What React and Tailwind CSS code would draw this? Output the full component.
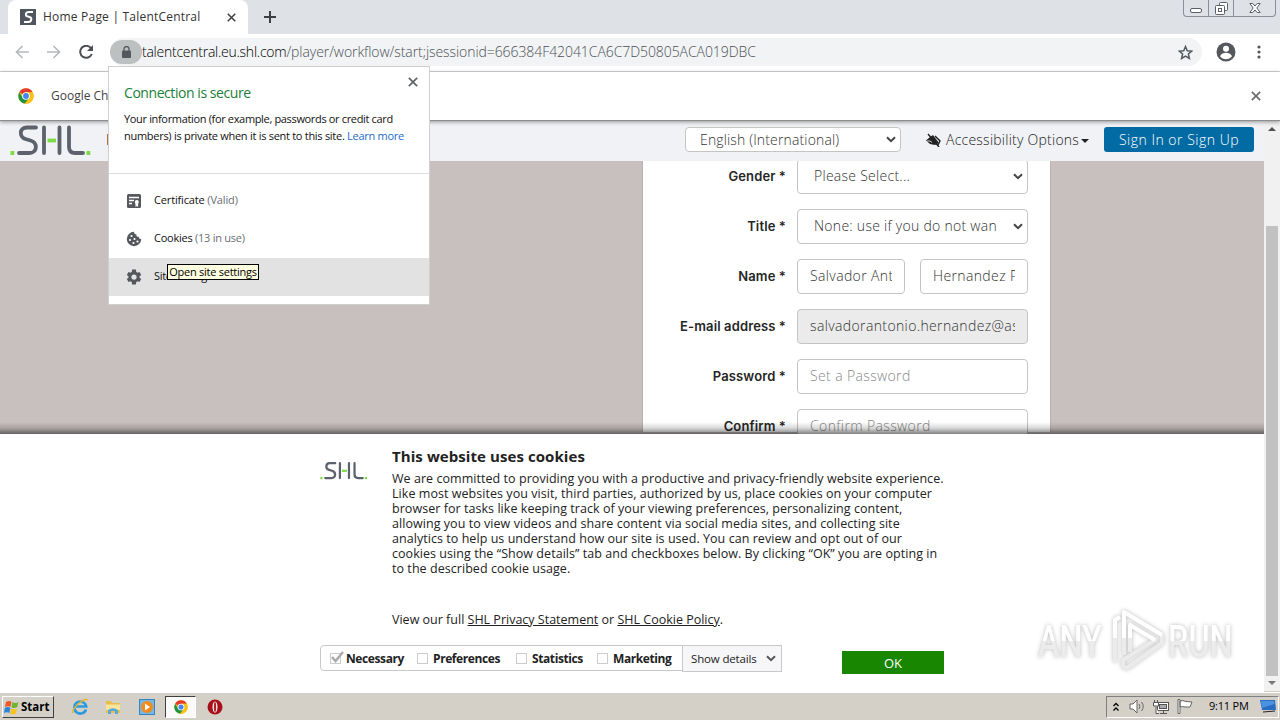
import React from 'react';

const Close = ({ className }) => (
  <svg className={className} viewBox="0 0 12 12" fill="none" stroke="currentColor" strokeWidth="2">
    <path d="M1 1l10 10M11 1L1 11" />
  </svg>
);

const Chevron = ({ className }) => (
  <svg className={className} viewBox="0 0 10 7" fill="none" stroke="currentColor" strokeWidth="2">
    <path d="M1 1.2l4 4 4-4" />
  </svg>
);

const ChromeLogo = ({ className }) => (
  <svg className={className} viewBox="0 0 48 48">
    <circle cx="24" cy="24" r="23" fill="#fbc116" />
    <path d="M24 24L4 12.5A23 23 0 0 1 44 12.5H24z" fill="#e33b2e" />
    <path d="M4.1 12.5A23 23 0 0 0 21 46.8L34 30 24 24l-10 5z" fill="#229342" />
    <path d="M24 12.5h20A23 23 0 0 1 21 46.8L34 30z" fill="#fbc116" />
    <circle cx="24" cy="24" r="11.5" fill="#fff" />
    <circle cx="24" cy="24" r="8.8" fill="#4285f4" />
  </svg>
);

const ShlLogo = ({ className }) => (
  <svg className={className} viewBox="0 0 82 32" fill="none" strokeWidth="3.8">
    <g stroke="#5b626c" strokeLinecap="round" strokeLinejoin="round">
      <path d="M26 3.500H17c-8 0-8 9.500-1.500 11.500l5 1.500c8 2.500 6.500 12.500-1 12.500H9" />
      <path d="M34 3.500v25.500M49.500 3.500v25.500M59 3.500v19.500c0 4 2 6 6 6h8" />
    </g>
    <path d="M37.500 16.500h8.500" stroke="#7bdc43" />
    <path d="M.5 29h3.800M76.500 29h3.800" stroke="#7bdc43" />
  </svg>
);

const fields = [
  { label: 'Gender', value: 'Please Select...', select: true },
  { label: 'Title', value: 'None: use if you do not want to specify', select: true },
  { label: 'Name', value: 'Salvador Antonio', second: 'Hernandez Perez' },
  { label: 'E-mail address', value: 'salvadorantonio.hernandez@astellas.com', disabled: true },
  { label: 'Password', value: 'Set a Password', placeholder: true },
  { label: 'Confirm', value: 'Confirm Password', placeholder: true },
];

const Box = ({ field, text }) => (
  <div
    className={`flex h-[35px] min-w-0 flex-1 items-center rounded border border-[#c4c4c4] px-3 ${
      field.disabled ? 'bg-[#ebebeb]' : 'bg-white'
    } ${field.placeholder ? 'text-[#888]' : 'text-[#333]'}`}
  >
    <span
      className={`flex-1 overflow-hidden whitespace-nowrap pb-[2px] text-[14px] font-light ${
        field.select ? 'ml-1 mr-4 tracking-[0.27px]' : 'tracking-[0.37px]'
      }`}
    >
      {text}
    </span>
    {field.select && <Chevron className="-mr-2 h-[7px] w-[10px] shrink-0 text-[#444]" />}
  </div>
);

const TabStrip = () => (
  <div className="flex h-[34px] shrink-0 bg-[#dee1e6]">
    <div className="ml-2 flex w-[240px] items-center rounded-t-lg bg-white pl-3 pr-3">
      <svg className="h-4 w-4" viewBox="0 0 16 16">
        <rect width="16" height="16" fill="#50565e" />
        <path d="M13 3H9C5 3 5 7 8 7.500l1.500.5c3 .8 2 5-1 5H4" fill="none" stroke="#fff" strokeWidth="2" />
      </svg>
      <span className="ml-[7px] flex-1 whitespace-nowrap text-[12px] tracking-[0.21px] text-[#333]">Home Page | TalentCentral</span>
      <Close className="h-[9px] w-[9px] text-[#3c4043]" />
    </div>
    <svg className="ml-4 mt-[11px] h-3 w-3" viewBox="0 0 12 12" stroke="#3c4043" strokeWidth="2">
      <path d="M6 0v12M0 6h12" />
    </svg>
    <div className="ml-auto mr-1 flex h-[17px] w-[93px] rounded-b-[4px] border border-t-0 border-[#8b8f96] text-[#5b6068]">
      <div className="flex w-[25px] justify-center border-r border-[#8b8f96]">
        <div className="mt-2 h-[5px] w-3 rounded-[2px] border border-current bg-white" />
      </div>
      <div className="flex w-[25px] justify-center border-r border-[#8b8f96]">
        <svg className="mt-[2px] h-[13px] w-[13px]" viewBox="0 0 13 13" fill="#fff" stroke="currentColor">
          <rect x="4.500" y=".5" width="8" height="8" rx="1" />
          <rect x=".5" y="3.500" width="9" height="9" rx="1" />
          <rect x="3.500" y="6.500" width="3" height="3" />
        </svg>
      </div>
      <div className="flex flex-1 justify-center">
        <svg className="mt-[3px] h-[10px] w-3" viewBox="0 0 12 10" fill="#fff" stroke="currentColor">
          <path d="M.8.500h3L6 3 8.200.5h3L7.800 5l3.400 4.500h-3L6 7 3.800 9.500h-3L4.200 5z" />
        </svg>
      </div>
    </div>
  </div>
);

const Toolbar = () => (
  <div className="flex h-[38px] shrink-0 items-center border-b border-[#d5d7da] bg-white pb-px pl-[15px]">
    <svg className="h-[14px] w-[14px]" viewBox="0 0 14 14" fill="none" stroke="#b6b9bc" strokeWidth="1.600">
      <path d="M14 7H1.500M7.500 1L1.500 7l6 6" />
    </svg>
    <svg className="ml-[18px] h-[14px] w-[14px]" viewBox="0 0 14 14" fill="none" stroke="#b6b9bc" strokeWidth="1.600">
      <path d="M0 7h12.500M6.500 1l6 6-6 6" />
    </svg>
    <svg className="ml-[18px] h-[14px] w-[14px]" viewBox="0 0 14 14">
      <path d="M12 3.200A6 6 0 1 0 12.800 9" fill="none" stroke="#4c5054" strokeWidth="2" />
      <path d="M14 0v6H8z" fill="#4c5054" />
    </svg>
    <div className="ml-[17px] flex h-7 w-[1092px] items-center rounded-full bg-[#f1f3f4]">
      <div className="flex h-6 w-8 shrink-0 items-center justify-center rounded-full bg-[#bdc0c1]">
        <svg className="h-3 w-[9px]" viewBox="0 0 9 12">
          <rect y="4.500" width="9" height="7.500" rx="1" fill="#54585c" />
          <path d="M2 5V3a2.500 2.500 0 0 1 5 0v2" fill="none" stroke="#54585c" strokeWidth="1.300" />
        </svg>
      </div>
      <div className="whitespace-nowrap pb-px text-[14px] font-light text-[#4c5056]">
        <span className="tracking-[-0.25px] text-black">talentcentral.eu.shl.com</span>
        <span className="tracking-[-0.07px]">/player/workflow/start;jsessionid=666384F42041CA6C7D50805ACA019DBC</span>
      </div>
      <svg className="ml-auto mr-[9px] h-[15px] w-[15px]" viewBox="0 0 24 24" fill="none" stroke="#54585c" strokeWidth="2.400">
        <path d="M12 2.500l2.800 6.600 7.200.6-5.400 4.700 1.600 7-6.200-3.700-6.200 3.700 1.600-7L2 9.700l7.200-.6z" />
      </svg>
    </div>
    <svg className="ml-[14px] h-5 w-5" viewBox="0 0 20 20">
      <circle cx="10" cy="10" r="9.500" fill="#54585c" />
      <circle cx="10" cy="6.800" r="3" fill="#fff" />
      <path d="M4 14.200c1.400-2.600 3.500-3.400 6-3.400s4.600.8 6 3.400c-3 4-9 4-12 0z" fill="#fff" />
    </svg>
    <svg className="ml-[21px] h-[14px] w-1" viewBox="0 0 4 14" fill="#54585c">
      <circle cx="2" cy="2" r="1.600" />
      <circle cx="2" cy="7" r="1.600" />
      <circle cx="2" cy="12" r="1.600" />
    </svg>
  </div>
);

const PageHeader = () => (
  <header className="flex h-10 shrink-0 items-center bg-[#f0f2f5] pb-[3px] pl-[10px] pr-[10px] text-[14px] font-light text-[#222]">
    <ShlLogo className="h-8 w-[82px]" />
    <span className="ml-[14px] text-black">Home</span>
    <div className="ml-auto flex h-[25px] w-[216px] items-center justify-between rounded border border-[#c4c4c4] bg-white pl-[14px] pr-1 text-[#333]">
      <span className="tracking-[0.15px]">English (International)</span>
      <Chevron className="h-[7px] w-[10px] text-[#444]" />
    </div>
    <svg className="ml-[25px] h-[14px] w-[15px]" viewBox="0 0 15 14">
      <path d="M0 7.500L4 4l3-2 6 8-4 2-5-1z" fill="#222" />
      <path d="M2 1l11 13M9 3l5 5-2 4" fill="none" stroke="#222" strokeWidth="1.400" />
      <path d="M1 8h3l2 1.500" fill="none" stroke="#fff" strokeWidth=".8" />
    </svg>
    <span className="ml-[5px] w-[133px] whitespace-nowrap tracking-[0.24px]">Accessibility Options</span>
    <svg className="ml-[2px] mt-[2px] h-1 w-2" viewBox="0 0 8 4"><path d="M0 0h8L4 4z" fill="#222" /></svg>
    <div className="ml-[15px] flex h-[25px] w-[150px] items-center justify-center whitespace-nowrap rounded-[3px] bg-[#036ba3] tracking-[0.5px] text-white">
      Sign In or Sign Up
    </div>
  </header>
);

const Registration = () => (
  <div className="relative h-[273px] shrink-0 overflow-hidden bg-[#c8c0bf]">
    <div className="ml-[642px] h-full w-[409px] border-x border-[#b9b1b0] bg-white pl-3 pr-[22px]">
      <div className="-mt-[2px] flex flex-col gap-[15px]">
        {fields.map((field) => (
          <div key={field.label} className="flex items-center">
            <label className="w-[131px] whitespace-nowrap text-right font-['Inter'] text-[13px] font-semibold tracking-[0.12px] text-[#262626]">
              {field.label} *
            </label>
            <div className="ml-[11px] flex w-[231px] gap-[15px]">
              <Box field={field} text={field.value} />
              {field.second && <Box field={field} text={field.second} />}
            </div>
          </div>
        ))}
      </div>
    </div>
    <div className="absolute inset-x-0 bottom-0 h-[12px] bg-linear-to-t from-black/50 via-black/15 to-transparent" />
  </div>
);

const consents = [
  { name: 'Necessary', width: 'w-[87px]', checked: true },
  { name: 'Preferences', width: 'w-[99px]' },
  { name: 'Statistics', width: 'w-[81px]' },
  { name: 'Marketing', width: 'w-[80px]' },
];

const lines = [
  'We are committed to providing you with a productive and privacy-friendly website experience.',
  'Like most websites you visit, third parties, authorized by us, place cookies on your computer',
  'browser for tasks like keeping track of your viewing preferences, personalizing content,',
  'allowing you to view videos and share content via social media sites, and collecting site',
  'analytics to help us understand how our site is used. You can review and opt out of our',
  'cookies using the “Show details” tab and checkboxes below. By clicking “OK” you are opting in',
  'to the described cookie usage.',
];

const WatermarkWord = ({ children }) => (
  <span className="mt-[3px] inline-block origin-left scale-x-[0.72] bg-linear-to-b from-white from-50% to-[#ececec] to-50% bg-clip-text text-transparent">
    {children}
  </span>
);

const Watermark = () => (
  <div className="absolute left-[1038px] top-[174px] flex h-[64px] items-center font-['Roboto'] text-[45px] font-medium leading-none drop-shadow-[0_0_2px_#bbb]">
    <div className="w-[72px] shrink-0"><WatermarkWord>ANY</WatermarkWord></div>
    <svg className="h-[64px] w-[58px] shrink-0" viewBox="0 0 58 64" fill="none" strokeWidth="4" strokeLinejoin="round">
      <path d="M14 47V4l38 23v8L17 60l-4-2v-6l32-20-25-15v27" stroke="#ebebeb" />
      <path d="M5 54V12l5-3" stroke="#ebebeb" />
      <path d="M14 30V4l38 23M5 30V12l5-3M20 30V17l25 15" stroke="#fff" />
    </svg>
    <WatermarkWord>RUN</WatermarkWord>
  </div>
);

const CookieBanner = () => (
  <section className="relative h-[258px] shrink-0 bg-white pl-[320px] text-[#222]">
    <div className="flex">
      <ShlLogo className="mt-[27px] h-[19px] w-[48px]" />
      <div className="ml-6 pt-[12px]">
        <h2 className="text-[15px] font-bold leading-[20px] tracking-[0.08px]">This website uses cookies</h2>
        <p className="mt-[5px] text-[12.5px] leading-[15px] tracking-[0.05px]">
          {lines.map((line) => (
            <span key={line} className="block whitespace-nowrap">{line}</span>
          ))}
        </p>
        <p className="mt-9 text-[12.5px] leading-[15px]">
          View our full <a className="underline">SHL Privacy Statement</a> or <a className="underline">SHL Cookie Policy</a>.
        </p>
      </div>
    </div>
    <div className="mt-[18px] flex text-[12px]">
      <div className="flex h-[26px] w-[363px] items-center rounded-l border border-[#c8c8c8] pl-[9px]">
        {consents.map(({ name, width, checked }) => (
          <div key={name} className={`flex shrink-0 items-center ${width}`}>
            <span className="relative mr-[5px] h-[11px] w-[11px] shrink-0 border border-[#ccc]">
              {checked && (
                <svg className="absolute -top-[3px] left-0 h-3 w-[13px]" viewBox="0 0 13 12">
                  <path d="M1 6l3.500 4L12 1" fill="none" stroke="#aaa" strokeWidth="2.500" />
                </svg>
              )}
            </span>
            <span className="mt-px whitespace-nowrap text-[12px] font-bold tracking-[-0.4px]">{name}</span>
          </div>
        ))}
      </div>
      <div className="-ml-px flex h-[27px] w-[100px] items-center justify-between border border-[#c8c8c8] bg-[#f6f6f9] pl-2 pr-[5px]">
        <span className="whitespace-nowrap text-[11.500px] tracking-[-0.15px]">Show details</span>
        <Chevron className="h-[7px] w-[10px] text-[#555]" />
      </div>
      <div className="ml-[60px] mt-[6px] flex h-[23px] w-[102px] items-center justify-center bg-[#188600] pt-[2px] text-[13px] text-white">OK</div>
    </div>
    <Watermark />
  </section>
);

const Scrollbar = () => (
  <div className="flex w-4 shrink-0 flex-col items-center bg-[#f1f1f1]">
    <svg className="mt-[6px] h-1 w-2" viewBox="0 0 8 4"><path d="M0 4h8L4 0z" fill="#505050" /></svg>
    <div className="mt-[95px] h-[450px] w-3 bg-[#c1c1c1]" />
    <svg className="mt-[5px] h-1 w-2" viewBox="0 0 8 4"><path d="M0 0h8L4 4z" fill="#777" /></svg>
  </div>
);

const SitePopup = () => (
  <div className="absolute left-[108px] top-[66px] h-[239px] w-[322px] border border-[#d0d0d0] bg-white text-[11px] text-[#111]">
    <div className="relative h-[107px] border-b border-[#dadce0] pl-[15px] pt-[16px]">
      <Close className="absolute right-[11px] top-[10px] h-[10px] w-[10px] text-[#5f6368]" />
      <h3 className="text-[14px] leading-5 tracking-[-0.44px] text-[#188038]">Connection is secure</h3>
      <p className="mt-[7px] whitespace-nowrap leading-[17px] tracking-[-0.34px]">
        Your information (for example, passwords or credit card<br />
        <span className="tracking-[-0.28px]">numbers) is private when it is sent to this site. <a className="text-[#1a6dc8]">Learn more</a></span>
      </p>
    </div>
    <div className="mt-[8px] flex h-[38px] items-center pl-[17px]">
      <svg className="h-4 w-4" viewBox="0 0 16 16">
        <rect x="1" y="1" width="14" height="14" rx="1.500" fill="#54585c" />
        <path d="M3 4.500h10M3 7.500h5M3 10.500h3" stroke="#fff" strokeWidth="1.300" />
        <circle cx="10.800" cy="9" r="2" fill="#fff" />
        <path d="M9.500 10h2.600v4l-1.300-1-1.300 1z" fill="#fff" />
      </svg>
      <span className="mb-[2px] ml-3 tracking-[-0.15px]">Certificate <span className="text-[#6a6e73]">(Valid)</span></span>
    </div>
    <div className="flex h-[38px] items-center pl-[17px]">
      <svg className="h-4 w-4" viewBox="0 0 16 16">
        <path d="M8 .8A7.200 7.200 0 1 0 15.200 8c-1.600 0-2.400-.8-2.400-2.300C11 6 10.200 5 10.500 3.400 9 3.400 8 2.500 8 .8z" fill="#54585c" />
        <g fill="#fff">
          <circle cx="5.500" cy="5" r="1.100" /><circle cx="4" cy="9" r="1.100" />
          <circle cx="8.500" cy="8" r="1.100" /><circle cx="7.500" cy="12" r="1.100" /><circle cx="11.500" cy="10.500" r="1.100" />
        </g>
      </svg>
      <span className="mb-[2px] ml-3 tracking-[-0.25px]">Cookies <span className="text-[#6a6e73]">(13 in use)</span></span>
    </div>
    <div className="relative flex h-[38px] items-center bg-[#e2e2e2] pl-[17px]">
      <svg className="-mx-px h-[18px] w-[18px]" viewBox="0 0 24 24" fill="#54585c">
        <path d="M19.400 13a7.500 7.500 0 0 0 0-2l2.200-1.700-2.300-4-2.600 1a8 8 0 0 0-1.700-1L14.600 2H9.400L9 5.300a8 8 0 0 0-1.700 1l-2.600-1-2.300 4L4.600 11a7.500 7.500 0 0 0 0 2l-2.200 1.700 2.300 4 2.600-1a8 8 0 0 0 1.700 1l.4 3.300h5.200l.4-3.300a8 8 0 0 0 1.700-1l2.600 1 2.300-4zM12 15.500a3.500 3.500 0 1 1 0-7 3.500 3.500 0 0 1 0 7z" />
      </svg>
      <span className="mb-[2px] ml-3 tracking-[-0.3px]">Site settings</span>
      <div className="absolute left-[58px] top-[6px] flex h-4 w-[92px] items-center justify-center whitespace-nowrap border border-black bg-[#ffffe1] text-[11px] tracking-[-0.25px] text-black">
        Open site settings
      </div>
    </div>
  </div>
);

const Taskbar = () => (
  <div className="flex h-[28px] shrink-0 items-center border-t border-white bg-[#d4d0c8] shadow-[0_-1px_0_#d4d0c8]">
    <div className="ml-[2px] flex h-[22px] w-[52px] items-center border border-b-[#404040] border-l-white border-r-[#404040] border-t-white pl-px text-[11.500px] font-bold text-black">
      <svg className="mr-px h-4 w-4 shrink-0" viewBox="0 0 16 16">
        <path d="M2 3q3-2 5.500-.2L6.500 8Q4 6.500 1 8z" fill="#ef5a29" />
        <path d="M8.500 3q3 2 6 0l-1.200 5q-3 2-5.800.2z" fill="#70b532" />
        <path d="M.8 9q3-1.800 5.600 0l-1 5Q3 12.500 0 14z" fill="#2a86d8" />
        <path d="M7.300 9.200q3 2 5.800.2l-1.200 5q-3 1.700-5.600 0z" fill="#fbc21c" />
      </svg>
      Start
    </div>
    <svg className="ml-[17px] h-[18px] w-[18px]" viewBox="0 0 18 18" fill="none">
      <path d="M15 11.500a6 6 0 1 1 .2-3H5" stroke="#2b9be0" strokeWidth="2.600" />
      <path d="M2 15C-1 12 13-1 17 2" stroke="#e9b52d" strokeWidth="1.400" />
    </svg>
    <svg className="ml-4 h-4 w-4" viewBox="0 0 16 16">
      <path d="M1 2h5l1 2h8v10H1z" fill="#e8bf4f" />
      <path d="M1 5.500h14V11H1z" fill="#f8e59b" />
      <path d="M3 15v-4q5-3.500 10 0v4h-3v-3H6v3z" fill="#55a9dc" />
    </svg>
    <svg className="ml-[18px] h-4 w-4" viewBox="0 0 16 16">
      <rect x=".5" y=".5" width="15" height="15" fill="#75b8e8" stroke="#3584bd" />
      <circle cx="8" cy="8" r="6" fill="#f28b1c" />
      <path d="M6 4.500l5 3.500-5 3.500z" fill="#fff" />
    </svg>
    <div className="ml-[10px] flex h-[22px] w-[31px] items-center justify-center border border-b-white border-l-[#404040] border-r-white border-t-[#404040] bg-[#fbfaf8]">
      <ChromeLogo className="h-[14px] w-[14px]" />
    </div>
    <svg className="ml-[11px] h-4 w-4" viewBox="0 0 16 16">
      <circle cx="8" cy="8" r="7.500" fill="#a90f18" />
      <ellipse cx="8" cy="8" rx="2.500" ry="5.500" fill="#fff" />
      <ellipse cx="8" cy="8" rx="1.200" ry="5" fill="#b3232b" />
    </svg>
    <div className="ml-auto mr-px flex h-[22px] w-[173px] items-center border border-b-white border-l-[#808080] border-r-white border-t-[#808080] pl-[6px] text-[11px] text-black">
      <svg className="h-[10px] w-[6px]" viewBox="0 0 6 10" fill="none" stroke="#000" strokeWidth="1.300">
        <path d="M.5 4L3 1.500 5.500 4M.5 8.500L3 6l2.500 2.500" />
      </svg>
      <svg className="ml-[10px] h-[15px] w-[17px]" viewBox="0 0 17 15" fill="none" stroke="#666">
        <path d="M1 5h3l4-4v13l-4-4H1z" fill="#fff" />
        <path d="M10 5q2 2.500 0 5M12.500 3q3.500 4.500 0 9" />
      </svg>
      <svg className="ml-[7px] h-4 w-4" viewBox="0 0 16 16" fill="#fff" stroke="#555">
        <rect x="4.500" y="3.500" width="11" height="8" /><rect x="6.500" y="5.500" width="7" height="4" fill="#aaa" />
        <path d="M7 14.500h7M10.500 12v2M3 8v6.500h3M1.500 1v2.500M4.500 1v2.500M.5 3.500h5V7H.5z" />
      </svg>
      <svg className="ml-[8px] h-[15px] w-4" viewBox="0 0 16 15" fill="#fff" stroke="#666">
        <path d="M1 .5h2v14H1zM3 2q3-1 6 .5l6 .5-2 5H8Q6 7 3 8z" />
      </svg>
      <span className="ml-[16px] whitespace-nowrap tracking-[-0.2px]">9:11 PM</span>
      <svg className="ml-auto mr-[2px] h-[13px] w-4" viewBox="0 0 16 13">
        <path d="M0 0h15l1 10H2z" fill="#286cc3" />
        <path d="M1 1h13l.5 3L2 8z" fill="#4a93df" />
        <path d="M3 12l12-1" stroke="#222" />
      </svg>
    </div>
  </div>
);

export default function App() {
  return (
    <div className="relative flex h-[720px] w-[1280px] flex-col overflow-hidden bg-white font-['Open_Sans','Noto_Sans',sans-serif]">
      <TabStrip />
      <Toolbar />
      <div className="relative z-10 flex h-[49px] shrink-0 items-center border-b border-[#8d8d8d] bg-white pl-[18px] pr-[19px] shadow-[0_1px_4px_#0006]">
        <ChromeLogo className="h-4 w-4" />
        <span className="ml-[17px] whitespace-nowrap text-[12px] text-[#444]">Google Chrome isn't your default browser</span>
        <Close className="ml-auto h-[10px] w-[10px] text-[#6a6a6a]" />
      </div>
      <div className="flex h-[571px] shrink-0">
        <main className="flex w-[1264px] flex-col">
          <PageHeader />
          <Registration />
          <CookieBanner />
        </main>
        <Scrollbar />
      </div>
      <Taskbar />
      <div className="z-20">
        <SitePopup />
      </div>
    </div>
  );
}
